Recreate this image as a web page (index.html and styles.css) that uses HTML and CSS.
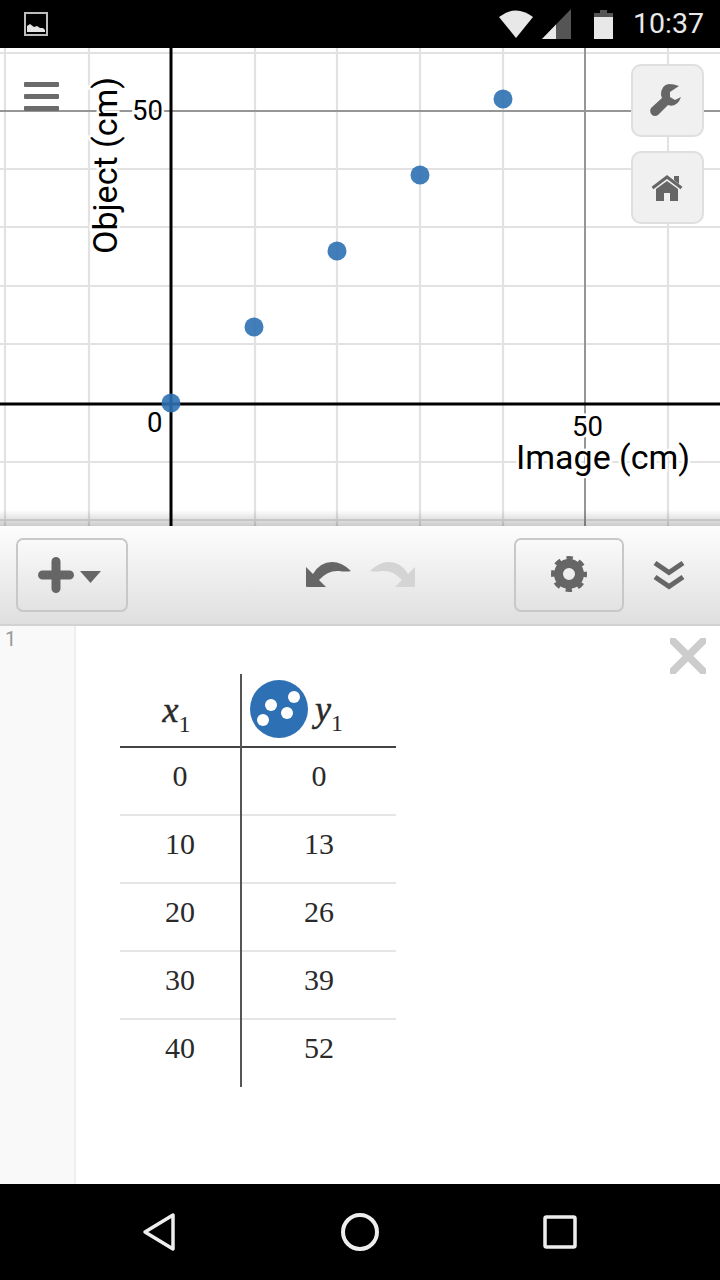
FILE: index.html
```html
<!DOCTYPE html>
<html lang="en">
<head>
<meta charset="utf-8">
<title>Graph</title>
<link rel="stylesheet" href="styles.css">
</head>
<body>
<div class="phone">
  <header class="statusbar">
    <svg class="st-image" viewBox="0 0 24 24"><rect x="1" y="1" width="22" height="22" fill="none" stroke="#bdbdbd" stroke-width="2"/><path d="M3 20v-6l3-2 4 3 3-1 3 2h3l2 2v2z" fill="#e4e4e4"/></svg>
    <div class="st-right">
      <svg class="st-wifi" viewBox="0 0 34 28"><path d="M0 7Q17-6 34 7L17 28z" fill="#e8e8e8"/></svg>
      <svg class="st-signal" viewBox="0 0 29 30"><path d="M0 30L29 0V30z" fill="#555"/><path d="M0 30L14 15.500V30z" fill="#e8e8e8"/></svg>
      <svg class="st-battery" viewBox="0 0 19 29"><path d="M6 0h7v3h6v26H0V3h6z" fill="#555"/><path d="M0 7h19v22H0z" fill="#e8e8e8"/></svg>
      <span class="st-time">10:37</span>
    </div>
  </header>

  <main class="graph">
    <svg class="plot" viewBox="0 48 720 478">
      <g class="minor">
        <path d="M5 48V526M89 48V526M255 48V526M337 48V526M420 48V526M503 48V526M668 48V526"/>
        <path d="M0 53H720M0 169H720M0 227H720M0 286H720M0 344H720M0 462H720M0 520H720"/>
      </g>
      <path class="major" d="M585 48V526M0 111H720"/>
      <path class="axis" d="M171 48V526M0 404H720"/>
      <g class="dots">
        <circle cx="171" cy="403" r="9.500"/><circle cx="254" cy="327" r="9.500"/><circle cx="337" cy="251" r="9.500"/><circle cx="420" cy="175" r="9.500"/><circle cx="503" cy="99" r="9.500"/>
      </g>
      <text class="tick" x="132" y="120">50</text>
      <text class="tick" x="147" y="432">0</text>
      <text class="tick" x="572" y="436">50</text>
      <text class="axis-label" x="516" y="469">Image (cm)</text>
      <text class="axis-label" transform="translate(117 254) rotate(-90)">Object (cm)</text>
    </svg>
    <div class="menu-icon"><span></span><span></span><span></span></div>
    <div class="graph-tools">
      <button class="tool">
        <svg class="ic-wrench" viewBox="0 0 33 33"><path d="M29 2Q24 0 19 0Q11 1 11 11L12 14L1 24Q-1 28 2 31Q5 33 8 31L18 21Q27 24 31 13L25 16L20 13L20 8z" fill="#666"/></svg>
      </button>
      <button class="tool">
        <svg class="ic-home" viewBox="0 0 32 26"><path d="M1.500 13L16 2 30.500 13" stroke="#666" stroke-width="3" fill="none"/><path d="M23 1h5v8l-5-4z" fill="#666"/><path d="M5 14L16 6l11 8v12h-8v-8h-6v8H5z" fill="#666"/></svg>
      </button>
    </div>
    <div class="graph-shadow"></div>
  </main>

  <nav class="toolbar">
    <button class="tbtn tbtn-add">
      <svg class="ic-plus" viewBox="0 0 36 36"><path d="M18 4.500V31.500M4.500 18H31.500" stroke="#666" stroke-width="9" stroke-linecap="round"/></svg>
      <svg class="ic-caret" viewBox="0 0 21 12"><path d="M0 0H21L10.500 12z" fill="#666"/></svg>
    </button>
    <div class="history">
      <svg class="ic-hist" viewBox="0 0 45 25"><path d="M0 5V24Q0 25 1 25H20L13 18Q22 8 33 9Q40 10 45 9Q36 0 26 0Q14 0 7 12z" fill="#666"/></svg>
      <svg class="ic-hist" viewBox="0 0 45 25"><path d="M45 5V24Q45 25 44 25H25L32 18Q23 8 12 9Q5 10 0 9Q9 0 19 0Q31 0 38 12z" fill="#d4d4d4"/></svg>
    </div>
    <button class="tbtn tbtn-gear">
      <svg class="ic-gear" viewBox="0 0 36 36"><circle cx="18" cy="18" r="10.500" fill="none" stroke="#666" stroke-width="9"/><circle cx="18" cy="18" r="15.500" fill="none" stroke="#666" stroke-width="5" stroke-dasharray="6.200 6" stroke-dashoffset="3.100"/></svg>
    </button>
    <svg class="ic-chev" viewBox="0 0 32 30"><path d="M2 3L16 12.500 30 3M2 17L16 26.500 30 17" fill="none" stroke="#666" stroke-width="5"/></svg>
  </nav>

  <section class="list">
    <div class="gutter">1</div>
    <div class="expr">
      <table class="dtable">
        <thead>
          <tr>
            <th class="c1"><span class="math"><i>x</i><sub>1</sub></span></th>
            <th class="c2">
              <div class="head-y">
                <svg class="point-ic" viewBox="0 0 58 58"><circle cx="29" cy="29" r="29" fill="#2d70b3"/><g fill="#fff"><circle cx="21" cy="25" r="6"/><circle cx="44" cy="17" r="6"/><circle cx="37" cy="33" r="6"/><circle cx="13" cy="40" r="6"/></g></svg>
                <span class="math"><i>y</i><sub>1</sub></span>
              </div>
            </th>
          </tr>
        </thead>
        <tbody>
          <tr><td class="c1">0</td><td class="c2">0</td></tr>
          <tr><td class="c1">10</td><td class="c2">13</td></tr>
          <tr><td class="c1">20</td><td class="c2">26</td></tr>
          <tr><td class="c1">30</td><td class="c2">39</td></tr>
          <tr><td class="c1">40</td><td class="c2">52</td></tr>
        </tbody>
      </table>
      <svg class="ic-close" viewBox="0 0 36 36"><path d="M3 3L33 33M33 3L3 33" stroke="#ccc" stroke-width="7.500" stroke-linecap="round"/></svg>
    </div>
  </section>

  <footer class="navbar">
    <svg class="nv-back" viewBox="0 0 34 40"><path d="M31 3V37L3 20z" fill="none" stroke="#eee" stroke-width="3.500" stroke-linejoin="round"/></svg>
    <svg class="nv-home" viewBox="0 0 38 38"><circle cx="19" cy="19" r="17" fill="none" stroke="#eee" stroke-width="4"/></svg>
    <svg class="nv-recent" viewBox="0 0 34 34"><rect x="2" y="2" width="30" height="30" rx="1.500" fill="none" stroke="#eee" stroke-width="3.500"/></svg>
  </footer>
</div>
</body>
</html>
```

FILE: styles.css
```css
* { box-sizing: border-box; }
html, body { margin: 0; padding: 0; background: #fff; }
svg { display: block; flex: none; }
button { padding: 0; margin: 0; font: inherit; cursor: pointer; }

.phone {
  width: 720px;
  height: 1280px;
  display: flex;
  flex-direction: column;
  overflow: hidden;
  font-family: Roboto, "Liberation Sans", sans-serif;
}

/* status bar */
.statusbar {
  height: 48px;
  background: #000;
  display: flex;
  align-items: center;
  justify-content: space-between;
  padding: 0 16px 0 24px;
}
.st-image { width: 24px; height: 24px; }
.st-right { display: flex; align-items: center; }
.st-wifi { width: 34px; height: 28px; margin-right: 9px; }
.st-signal { width: 29px; height: 30px; margin-right: 23px; }
.st-battery { width: 19px; height: 29px; margin-right: 20px; }
.st-time { color: #e8e8e8; font-size: 28.500px; line-height: 48px; }

/* graph */
.graph { position: relative; height: 478px; background: #fff; flex: none; }
.plot { width: 720px; height: 478px; }
.minor path { stroke: #e2e2e2; stroke-width: 2.200; fill: none; }
.major { stroke: #969696; stroke-width: 2; fill: none; }
.axis { stroke: #000; stroke-width: 3; fill: none; }
.dots circle { fill: #2d70b3; fill-opacity: .9; }
.tick, .axis-label {
  font-family: Roboto, "Liberation Sans", sans-serif;
  fill: #000;
  stroke: #fff;
  stroke-width: 5px;
  paint-order: stroke;
}
.tick { font-size: 27.500px; }
.axis-label { font-size: 34px; }

.menu-icon {
  position: absolute;
  left: 24px;
  top: 34px;
  display: flex;
  flex-direction: column;
  gap: 7px;
}
.menu-icon span { display: block; width: 35px; height: 5px; border-radius: 1px; background: #6b6b6b; }

.graph-tools {
  position: absolute;
  left: 631px;
  top: 16px;
  display: flex;
  flex-direction: column;
  gap: 14px;
}
.tool {
  width: 73px;
  height: 73px;
  background: #f0f0f0;
  border: 2px solid #dfdfdf;
  border-radius: 10px;
  display: flex;
  align-items: center;
  justify-content: center;
  padding-right: 2px;
}
.ic-wrench { width: 33px; height: 33px; }
.ic-home { width: 32px; height: 26px; }

.graph-shadow {
  position: absolute;
  left: 0;
  right: 0;
  bottom: 0;
  height: 16px;
  background: linear-gradient(to bottom, rgba(0,0,0,0), rgba(0,0,0,.2));
}

/* toolbar */
.toolbar {
  height: 100px;
  flex: none;
  display: flex;
  align-items: flex-start;
  padding: 12px 0 0 16px;
  background: linear-gradient(to bottom, #fdfdfd, #dfdfdf);
  border-bottom: 2px solid #d2d2d2;
}
.tbtn {
  height: 74px;
  background: linear-gradient(to bottom, #fafafa, #e2e2e2);
  border: 2px solid #c8c8c8;
  border-radius: 7px;
  display: flex;
  align-items: center;
  justify-content: center;
}
.tbtn-add { width: 112px; gap: 6px; padding-right: 5px; }
.ic-plus { width: 36px; height: 36px; }
.ic-caret { width: 21px; height: 12px; margin-top: 4px; }
.history { display: flex; gap: 19px; margin: 24px 0 0 178px; }
.ic-hist { width: 45px; height: 25px; }
.tbtn-gear { width: 110px; margin-left: 99px; padding-bottom: 2px; }
.ic-gear { width: 36px; height: 36px; }
.ic-chev { width: 32px; height: 30px; margin: 22px 0 0 29px; }

/* expression list */
.list { height: 558px; flex: none; display: flex; background: #fff; }
.gutter {
  width: 76px;
  background: #f9f9f9;
  border-right: 2px solid #eee;
  color: #9a9a9a;
  font-size: 20px;
  line-height: 20px;
  padding: 3px 0 0 5px;
}
.expr { position: relative; flex: 1; padding: 48px 0 0 44px; }
.ic-close { position: absolute; left: 594px; top: 12px; width: 36px; height: 36px; }

.dtable {
  border-collapse: collapse;
  font-family: "Liberation Serif", serif;
  font-size: 30px;
  color: #2a2a2a;
}
.dtable th, .dtable td { padding: 0; font-weight: 400; text-align: center; }
.dtable .c1 { width: 121px; border-right: 2px solid #555; }
.dtable .c2 { width: 155px; }
.dtable thead tr { height: 72px; border-bottom: 2px solid #444; }
.dtable tbody tr { height: 68px; border-bottom: 2px solid #e6e6e6; }
.dtable tbody tr:last-child { border-bottom: 0; }
.dtable td { vertical-align: top; padding-top: 11px; line-height: 34px; }
.dtable th { vertical-align: bottom; }
.math { font-size: 36px; line-height: 36px; }
.math i { -webkit-text-stroke: 0.5px #2a2a2a; }
.math sub { font-size: 24px; line-height: 0; vertical-align: -10px; }
.c1 .math { display: block; padding: 0 0 18px; margin-left: -7px; }
.head-y { display: flex; align-items: center; height: 72px; padding: 0 0 2px 8px; gap: 7px; }
.head-y .math { padding-top: 0; }
.point-ic { width: 58px; height: 58px; }

/* navigation bar */
.navbar {
  height: 96px;
  flex: none;
  background: #000;
  position: relative;
  display: flex;
  align-items: center;
  padding: 0 0 0 142px;
}
.nv-back { width: 34px; height: 40px; }
.nv-home { width: 38px; height: 38px; margin-left: 165px; }
.nv-recent { width: 34px; height: 34px; margin-left: 164px; }
```
